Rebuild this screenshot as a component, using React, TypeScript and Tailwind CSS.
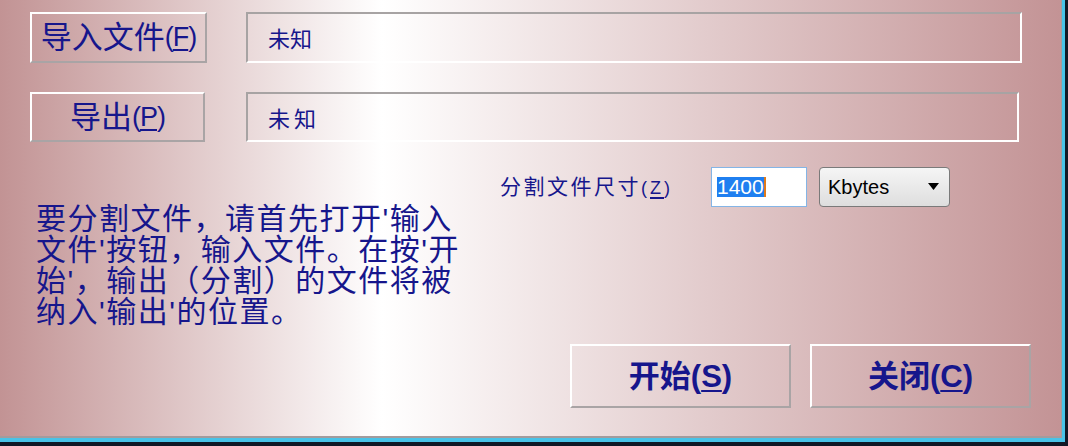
import React from "react";

// Windows-style file splitter dialog on a rose gradient

const FONT = "font-['Liberation_Sans','Noto_Sans_CJK_SC',sans-serif]";

function Mnemonic({ k, className = "" }: { k: string; className?: string }) {
  return (
    <span className={className}>
      (<span className="underline underline-offset-[3px] decoration-[1.5px]">{k}</span>)
    </span>
  );
}

function BevelButton({ className = "", children }: { className?: string; children: React.ReactNode }) {
  return (
    <button
      type="button"
      className={`flex items-center justify-center border-2 border-t-white border-l-white border-r-[#a9a4a5] border-b-[#a9a4a5] ${className}`}
    >
      {children}
    </button>
  );
}

function Field({ className = "", children }: { className?: string; children: React.ReactNode }) {
  return (
    <div
      className={`flex items-center pl-[20px] pt-[4px] border-2 border-t-[#a7a3a3] border-l-[#a7a3a3] border-r-white border-b-white text-[22px] ${className}`}
    >
      {children}
    </div>
  );
}

export default function App() {
  return (
    <div className={`w-[1068px] h-[446px] bg-[#111826] ${FONT}`}>
      <div className="w-[1065px] h-[442px] border-r-[3px] border-b-[4px] border-[#48c3e8]">
        <div className="w-full h-full border-r border-b-2 border-[#a39b9d]">
          <div className="h-full flex flex-col pl-[30px] pt-[12px] text-[#16168c] bg-[linear-gradient(to_right,#c29394_0%,#ffffff_36%,#c39395_100%)]">
            <div className="flex items-start">
              <BevelButton className="w-[177px] h-[51px] text-[31px] leading-none">
                导入文件
                <Mnemonic k="F" className="text-[27px] tracking-[-1px]" />
              </BevelButton>
              <Field className="ml-[39px] w-[776px] h-[51px]">未知</Field>
            </div>

            <div className="flex items-start mt-[29px]">
              <BevelButton className="w-[175px] h-[50px] text-[31px] leading-none">
                导出
                <Mnemonic k="P" className="text-[27px] tracking-[-1px]" />
              </BevelButton>
              <Field className="ml-[41px] w-[773px] h-[50px] tracking-[4px]">未知</Field>
            </div>

            <div className="flex flex-1">
              <div className="w-[470px] pl-[6px] pt-[61px]">
                <p className="text-[30px] leading-[31px] tracking-[1.5px] whitespace-nowrap">
                  要分割文件，请首先打开'输入
                  <br />
                  文件'按钮，输入文件。在按'开
                  <br />
                  始'，输出（分割）的文件将被
                  <br />
                  纳入'输出'的位置。
                </p>
              </div>

              <div className="flex flex-col">
                <div className="flex items-center h-[41px] mt-[24px]">
                  <div className="w-[211px] text-[21px] tracking-[2.5px] whitespace-nowrap">
                    分割文件尺寸
                    <Mnemonic k="Z" className="text-[18px] tracking-[3px]" />
                  </div>
                  <div className="w-[96px] h-[40px] flex items-center pl-[5px] bg-white border border-[#84b5e6]">
                    <span className="bg-[#1f7ff0] text-white text-[21px] leading-[20px] h-[20px]">1400</span>
                    <span className="w-[2px] h-[20px] bg-[#e07a1a]" />
                  </div>
                  <div className="ml-[12px] w-[131px] h-[40px] flex items-center justify-between pl-[8px] pr-[10px] rounded-[4px] border border-[#7a7a7a] bg-[linear-gradient(to_bottom,#f5f5f5,#dedede)] text-black text-[20px]">
                    <span>Kbytes</span>
                    <svg width="11" height="7" viewBox="0 0 11 7" aria-hidden>
                      <path d="M0 0h11L5.5 7z" fill="#000" />
                    </svg>
                  </div>
                </div>

                <div className="flex gap-[19px] pl-[70px] mt-[137px]">
                  <BevelButton className="w-[221px] h-[64px] text-[31px] font-bold leading-none">
                    开始
                    <Mnemonic k="S" />
                  </BevelButton>
                  <BevelButton className="w-[221px] h-[64px] text-[31px] font-bold leading-none">
                    关闭
                    <Mnemonic k="C" />
                  </BevelButton>
                </div>
              </div>
            </div>
          </div>
        </div>
      </div>
    </div>
  );
}
